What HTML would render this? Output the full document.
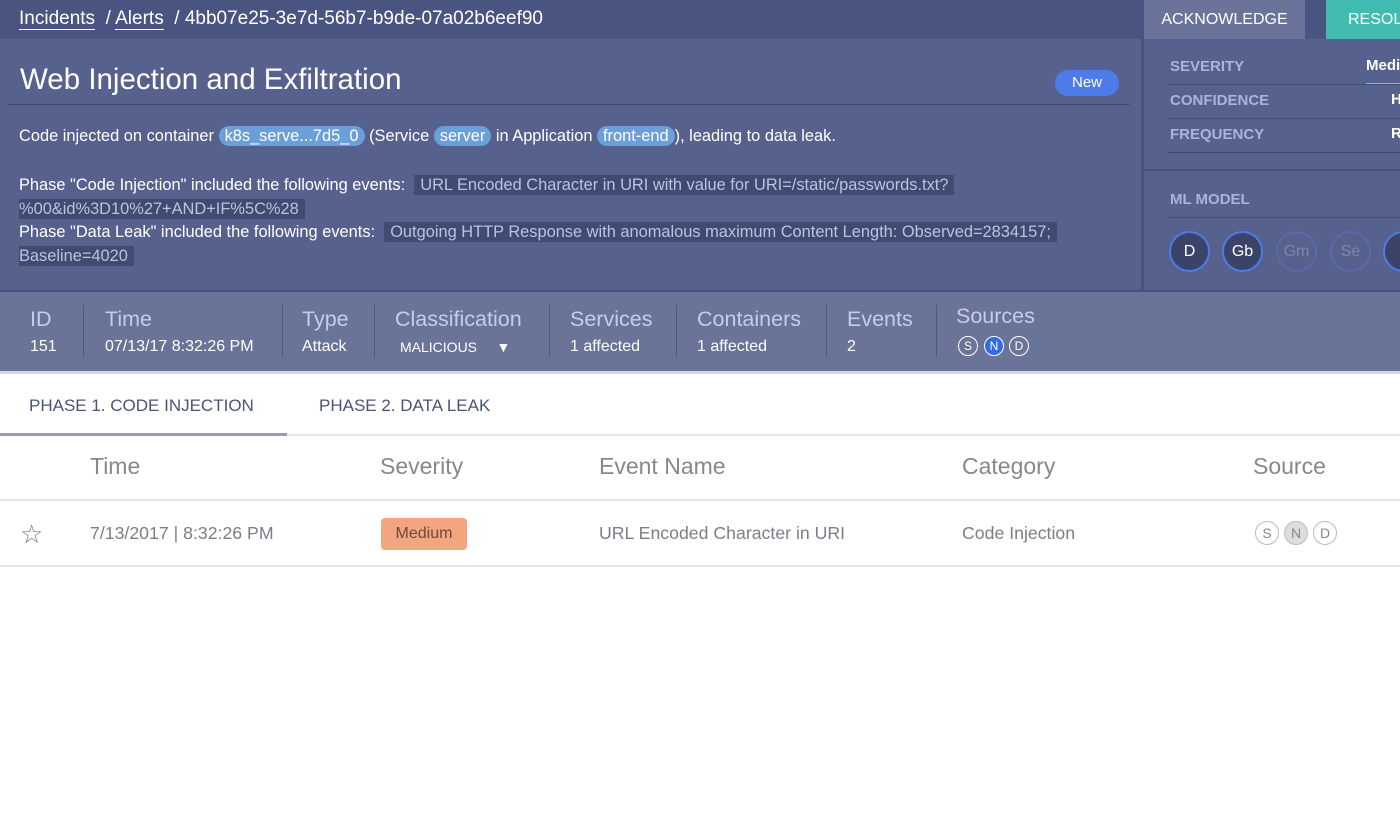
<!DOCTYPE html>
<html><head><meta charset="utf-8"><style>
*{box-sizing:border-box;margin:0;padding:0}
body{width:1400px;height:837px;overflow:hidden;background:#fff;font-family:"Liberation Sans",sans-serif;position:relative}
.abs{position:absolute;white-space:nowrap}
.top{left:0;top:0;width:1400px;height:39px;background:#4a5480}
.crumb{left:19px;top:8px;color:#fff;font-size:19px}
.crumb u{text-decoration:none;border-bottom:1px solid #fff}
.ack{left:1144px;top:0;width:161px;height:39px;background:#6a7399;color:#fff;font-size:16px;text-align:center;line-height:39px}
.res{left:1326px;top:0;width:80px;height:39px;background:#42bcb0;color:#fff;font-size:16px;line-height:39px;padding-left:22px}
.main{left:0;top:39px;width:1400px;height:251px;background:#56618e}
.side{left:1141px;top:39px;width:3px;height:251px;background:#48527c}
.title{left:20px;top:63px;color:#fff;font-size:29.5px;font-weight:300}
.line{background:#434c77;height:1px}
.new{left:1055px;top:70px;width:64px;height:26px;border-radius:13px;background:#4d7ce8;color:#fff;font-size:15px;text-align:center;line-height:26px}
.t{color:#fff;font-size:16.4px}
.pill{background:#6b9fd9;color:#fff;border-radius:10px;padding:1px 6px}
.hl{background:#3f4b70;color:#b6c4e6;padding:1px 6px}
.lab{color:#aab4d8;font-size:15px;font-weight:bold;left:1170px}
.circ{width:41px;height:41px;border-radius:50%;border:2px solid #4d7ce8;background:#3b4468;color:#fff;font-size:16px;text-align:center;line-height:37px;top:231px}
.circ.d{background:#56618e;border-color:#5b6aa6;color:#7c86ad}
.stats{left:0;top:290px;width:1400px;height:81px;background:#6a7499;border-top:2px solid #48527c}
.sh{color:#c5cdec;font-size:21.5px;top:307px}
.sv{color:#fff;font-size:16px;top:338px}
.sep{width:1px;height:52px;background:#4e5780;top:305px}
.tab{font-size:17px;color:#4a5478;top:396px}
.th{font-size:23px;color:#888;font-weight:300;top:453px}
.td{font-size:17.7px;color:#7d7d85;top:523px}
.src{width:24px;height:24px;border-radius:50%;border:1px solid #bbb;font-size:14px;color:#888;text-align:center;line-height:22px;top:521px}
.ss{width:20px;height:20px;border-radius:50%;border:1px solid #fff;font-size:12px;color:#fff;text-align:center;line-height:18px;top:336px}
</style></head><body>
<div class="abs top"></div>
<div class="abs crumb"><u>Incidents</u> &nbsp;/ <u>Alerts</u> &nbsp;/ 4bb07e25-3e7d-56b7-b9de-07a02b6eef90</div>
<div class="abs ack">ACKNOWLEDGE</div>
<div class="abs res">RESOLVE</div>
<div class="abs main"></div>
<div class="abs side"></div>
<div class="abs title">Web Injection and Exfiltration</div>
<div class="abs new">New</div>
<div class="abs line" style="left:8px;top:104px;width:1122px"></div>
<div class="abs t" style="left:19px;top:127px">Code injected on container <span class="pill">k8s_serve...7d5_0</span> (Service <span class="pill">server</span> in Application <span class="pill">front-end</span>), leading to data leak.</div>
<div class="abs t" style="left:19px;top:174px;line-height:23.5px">Phase "Code Injection" included the following events: &nbsp;<span class="hl">URL Encoded Character in URI with value for URI=/static/passwords.txt?</span><br><span class="hl" style="padding-left:0">%00&amp;id%3D10%27+AND+IF%5C%28 </span><br>Phase "Data Leak" included the following events: &nbsp;<span class="hl">Outgoing HTTP Response with anomalous maximum Content Length: Observed=2834157;</span><br><span class="hl" style="padding-left:0">Baseline=4020 </span></div>
<div class="abs lab" style="top:58px">SEVERITY</div><div class="abs t" style="left:1366px;top:57px;font-weight:bold;font-size:15px">Medium</div>
<div class="abs lab" style="top:92px">CONFIDENCE</div><div class="abs t" style="left:1391px;top:91px;font-weight:bold;font-size:15px">High</div>
<div class="abs lab" style="top:126px">FREQUENCY</div><div class="abs t" style="left:1391px;top:125px;font-weight:bold;font-size:15px">Rare</div>
<div class="abs line" style="left:1168px;top:84px;width:232px"></div>
<div class="abs line" style="left:1168px;top:118px;width:232px"></div>
<div class="abs line" style="left:1168px;top:152px;width:232px"></div>
<div class="abs" style="left:1366px;top:83px;width:34px;height:1px;background:#c9a89a"></div>
<div class="abs" style="left:1144px;top:169px;width:256px;height:2px;background:#48527c"></div>
<div class="abs lab" style="top:191px">ML MODEL</div>
<div class="abs line" style="left:1168px;top:217px;width:232px"></div>
<div class="abs circ" style="left:1169px">D</div>
<div class="abs circ" style="left:1222px">Gb</div>
<div class="abs circ d" style="left:1276px">Gm</div>
<div class="abs circ d" style="left:1330px">Se</div>
<div class="abs circ" style="left:1383px"></div>
<div class="abs stats"></div>
<div class="abs sh" style="left:30px">ID</div><div class="abs sv" style="left:30px">151</div>
<div class="abs sep" style="left:83px"></div>
<div class="abs sh" style="left:105px">Time</div><div class="abs sv" style="left:105px">07/13/17 8:32:26 PM</div>
<div class="abs sep" style="left:282px"></div>
<div class="abs sh" style="left:302px">Type</div><div class="abs sv" style="left:302px">Attack</div>
<div class="abs sep" style="left:374px"></div>
<div class="abs sh" style="left:395px">Classification</div><div class="abs sv" style="left:400px;font-size:14px;top:339px">MALICIOUS &nbsp;&nbsp;&nbsp;&nbsp;▼</div>
<div class="abs sep" style="left:549px"></div>
<div class="abs sh" style="left:570px">Services</div><div class="abs sv" style="left:570px">1 affected</div>
<div class="abs sep" style="left:676px"></div>
<div class="abs sh" style="left:697px">Containers</div><div class="abs sv" style="left:697px">1 affected</div>
<div class="abs sep" style="left:826px"></div>
<div class="abs sh" style="left:847px">Events</div><div class="abs sv" style="left:847px">2</div>
<div class="abs sep" style="left:936px"></div>
<div class="abs sh" style="left:956px;top:304px">Sources</div>
<div class="abs ss" style="left:958px">S</div><div class="abs ss" style="left:984px;background:#2f6be6">N</div><div class="abs ss" style="left:1009px">D</div>
<div class="abs" style="left:0;top:371px;width:1400px;height:3px;background:#d6d9e2"></div>
<div class="abs tab" style="left:29px">PHASE 1. CODE INJECTION</div>
<div class="abs tab" style="left:319px">PHASE 2. DATA LEAK</div>
<div class="abs" style="left:0;top:434px;width:1400px;height:2px;background:#e6e6e6"></div>
<div class="abs" style="left:0;top:433px;width:287px;height:3px;background:#9a9fae"></div>
<div class="abs th" style="left:90px">Time</div>
<div class="abs th" style="left:380px">Severity</div>
<div class="abs th" style="left:599px">Event Name</div>
<div class="abs th" style="left:962px">Category</div>
<div class="abs th" style="left:1253px">Source</div>
<div class="abs" style="left:0;top:499px;width:1400px;height:2px;background:#e6e6e6"></div>
<div class="abs" style="left:20px;top:521px;font-size:26px;color:#777;line-height:26px">☆</div>
<div class="abs td" style="left:90px">7/13/2017 | 8:32:26 PM</div>
<div class="abs" style="left:381px;top:518px;width:86px;height:32px;background:#f2a57e;border-radius:4px;color:#6b4a3a;font-size:16px;text-align:center;line-height:32px">Medium</div>
<div class="abs td" style="left:599px">URL Encoded Character in URI</div>
<div class="abs td" style="left:962px">Code Injection</div>
<div class="abs src" style="left:1255px">S</div><div class="abs src" style="left:1284px;background:#ddd">N</div><div class="abs src" style="left:1313px">D</div>
<div class="abs" style="left:0;top:565px;width:1400px;height:2px;background:#e6e6e6"></div>
</body></html>
